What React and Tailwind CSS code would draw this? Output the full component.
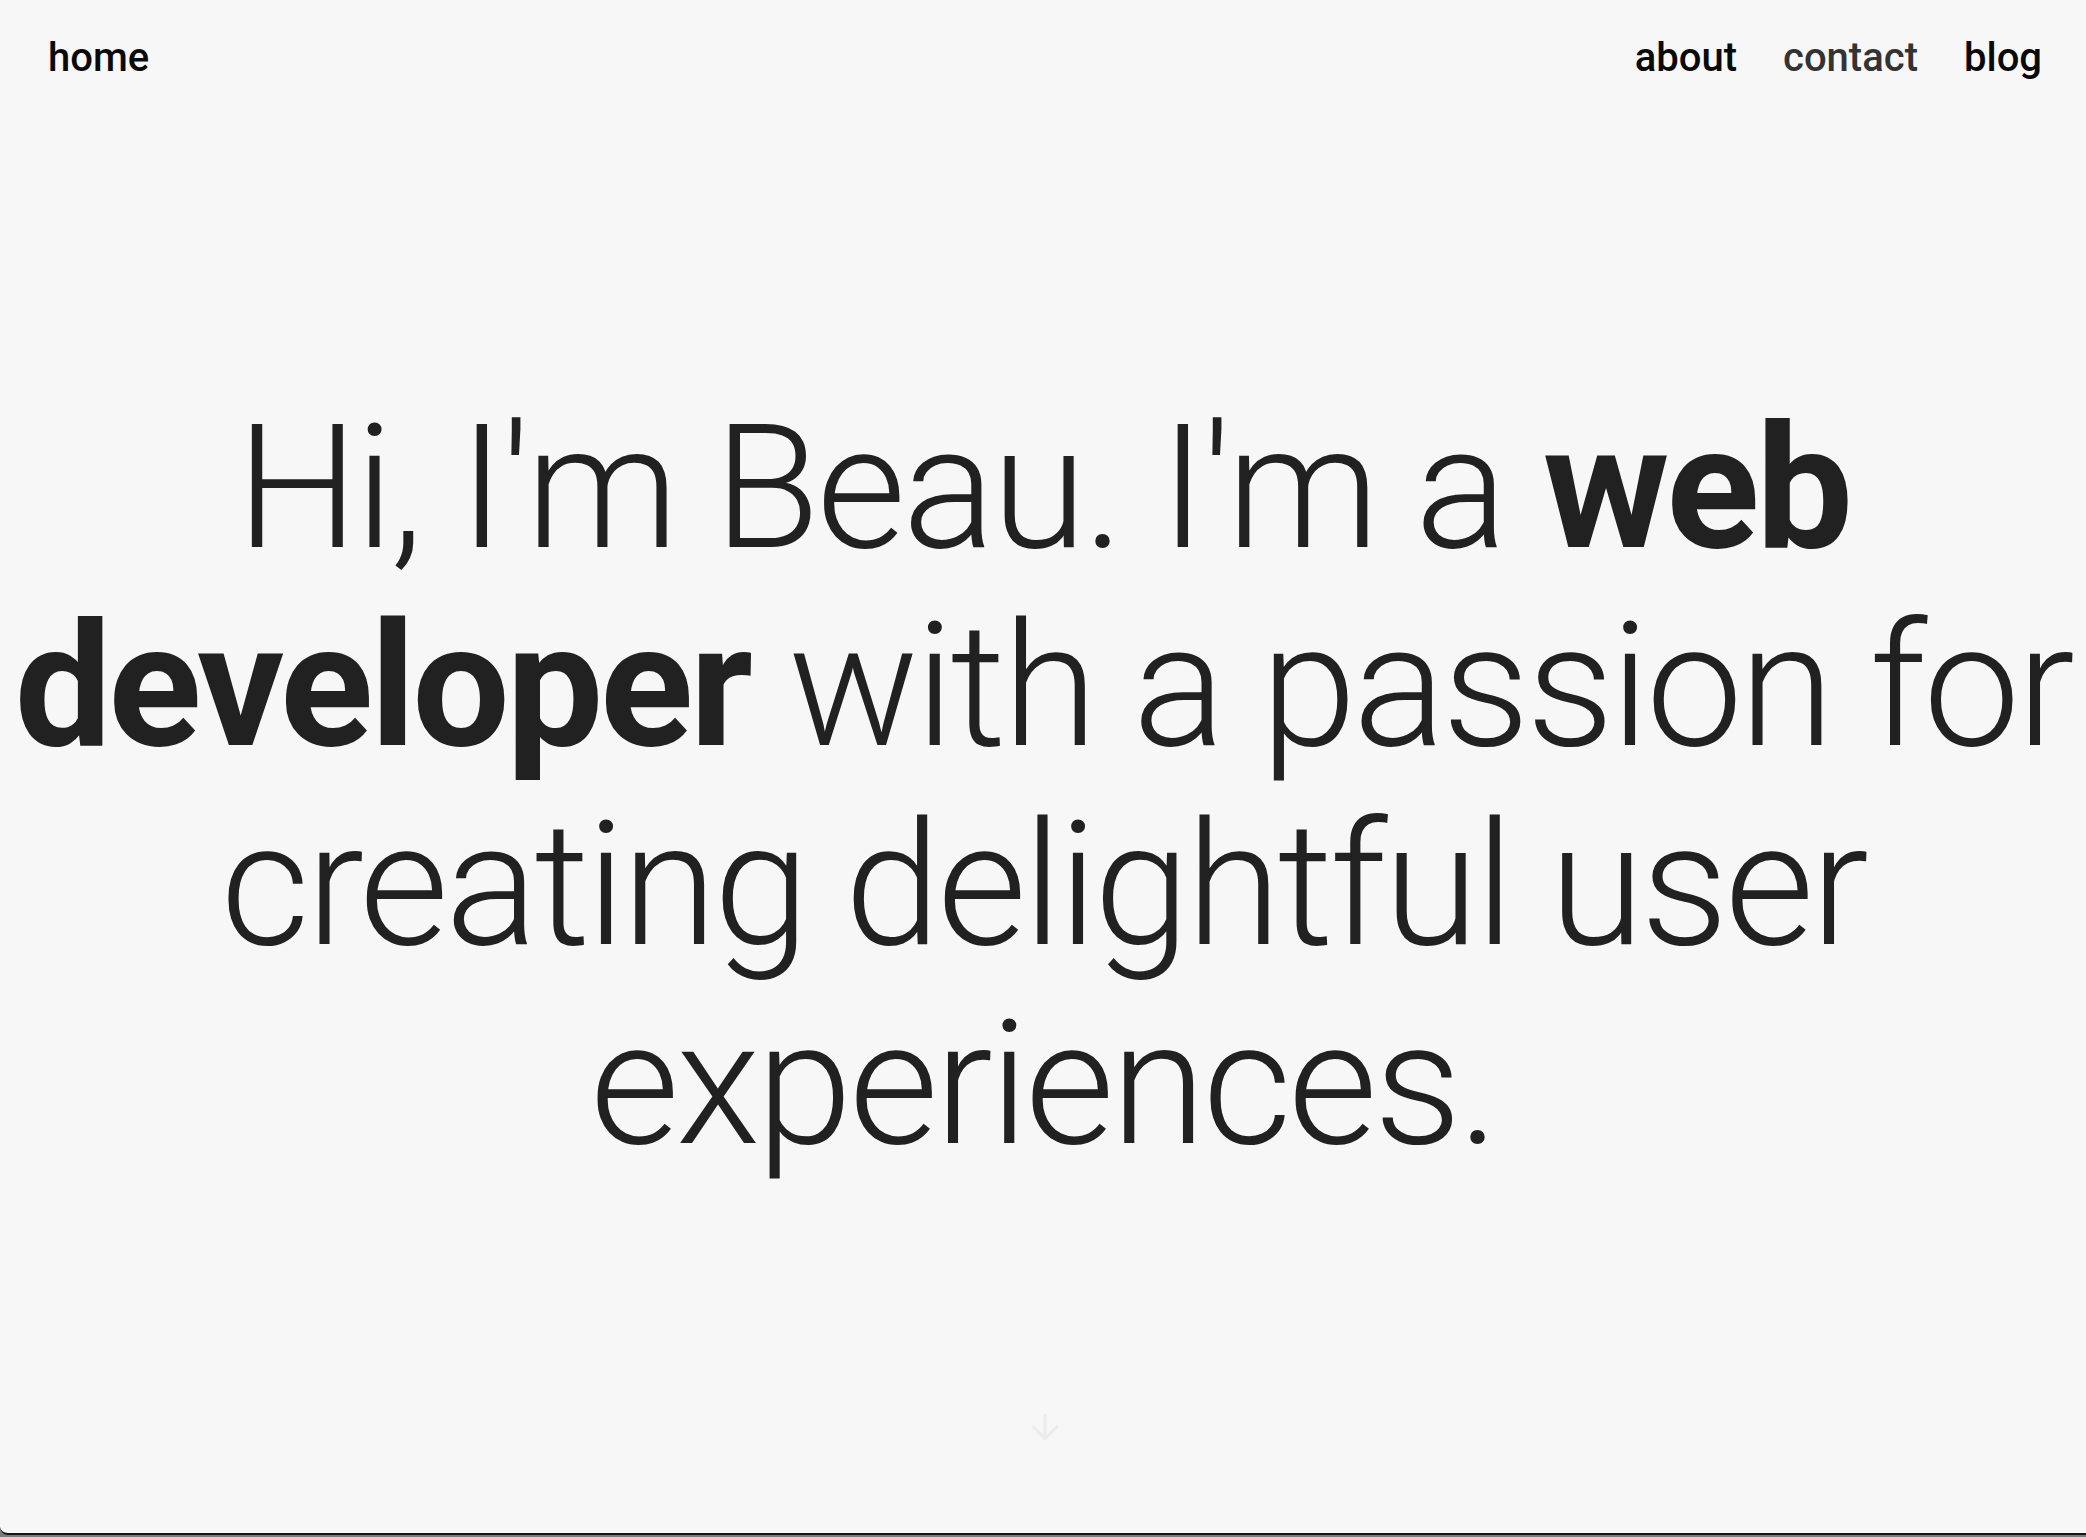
import React from 'react';
import { ArrowDown } from 'lucide-react';

// Top navigation bar
const NavBar = () => (
  <nav className="flex items-center justify-between pl-[48px] pr-[44px] py-7 text-[40px] leading-[1.5] font-medium">
    <a href="#" className="text-[#0a0a0a]">home</a>
    <div className="flex items-center gap-[46px]">
      <a href="#" className="text-[#0a0a0a]">about</a>
      <a href="#" className="text-[#333333]">contact</a>
      <a href="#" className="text-[#0a0a0a]">blog</a>
    </div>
  </nav>
);

export default function App() {
  return (
    <div className="h-[1537px] bg-[#7c7c7c]" style={{ fontFamily: 'Roboto, "Noto Sans", sans-serif' }}>
      <div className="relative flex h-[1535px] flex-col overflow-hidden rounded-bl-lg border-b-2 border-[#161616] bg-[#f7f7f7]">
        <NavBar />

        <main className="flex flex-1 items-center justify-center pb-[77px]">
          <h1 className="text-center text-[172.8px] leading-[1.15] font-light tracking-[-0.02em] text-[#212121]">
            Hi, I'm Beau. I'm a <strong className="font-bold">web developer</strong> with a passion for creating
            delightful user experiences.
          </h1>
        </main>

        {/* scroll hint */}
        <div className="absolute bottom-[86px] left-[1025px] text-[#ececec]">
          <ArrowDown size={40} strokeWidth={2} />
        </div>
      </div>
    </div>
  );
}
